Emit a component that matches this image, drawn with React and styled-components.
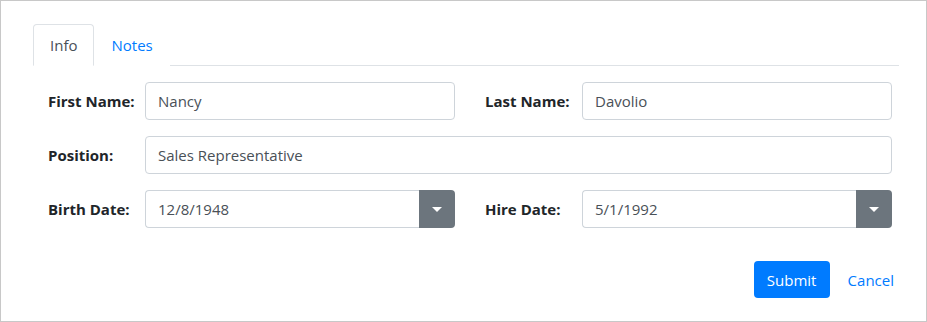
import React from 'react';
import styled, { createGlobalStyle } from 'styled-components';

const GlobalStyle = createGlobalStyle`
  html, body {
    margin: 0;
    padding: 0;
    background: #fff;
  }
  body {
    font-family: "Open Sans", "Noto Sans", Arial, sans-serif;
    font-size: 15px;
    color: #212529;
  }
`;

const Frame = styled.div`
  box-sizing: border-box;
  width: 927px;
  height: 322px;
  border: 1px solid #c8c8c8;
  padding: 23px 27px 0 32px;
`;

const TabBar = styled.div`
  display: flex;
  border-bottom: 1px solid #dee2e6;
  height: 41px;
`;

const Tab = styled.div`
  box-sizing: border-box;
  height: 42px;
  padding: 0 16px;
  display: flex;
  align-items: center;
  border: 1px solid ${p => (p.active ? '#dee2e6' : 'transparent')};
  border-bottom-color: ${p => (p.active ? '#fff' : 'transparent')};
  border-radius: 4px 4px 0 0;
  background: #fff;
  color: ${p => (p.active ? '#495057' : '#007bff')};
  cursor: pointer;
`;

const Form = styled.div`
  padding: 16px 7px 0 15px;
  display: flex;
  flex-direction: column;
  gap: 16px;
`;

const Row = styled.div`
  display: flex;
  align-items: center;
  gap: ${p => (p.gap || 0)}px;
`;

const Field = styled.div`
  display: flex;
  align-items: center;
  flex: ${p => (p.wide ? 1 : '0 0 407px')};
`;

const Label = styled.label`
  flex: 0 0 97px;
  font-weight: 700;
  color: #212529;
`;

const Input = styled.div`
  box-sizing: border-box;
  flex: 1;
  height: 38px;
  border: 1px solid #ced4da;
  border-radius: 4px;
  padding: 0 12px;
  display: flex;
  align-items: center;
  color: #495057;
  overflow: hidden;
`;

const PickerWrap = styled.div`
  flex: 1;
  display: flex;
  height: 38px;
`;

const PickerInput = styled(Input)`
  border-right: none;
  border-radius: 4px 0 0 4px;
`;

const PickerButton = styled.div`
  flex: 0 0 36px;
  background: #6c757d;
  border-radius: 0 4px 4px 0;
  display: flex;
  align-items: center;
  justify-content: center;
`;

const Actions = styled.div`
  display: flex;
  justify-content: flex-end;
  align-items: center;
  margin-top: 33px;
  padding-right: 5px;
  gap: 18px;
`;

const SubmitButton = styled.button`
  box-sizing: border-box;
  height: 37px;
  width: 76px;
  font-family: inherit;
  font-size: inherit;
  background: #007bff;
  color: #fff;
  border: none;
  border-radius: 4px;
  padding: 0;
`;

const CancelLink = styled.a`
  color: #007bff;
  text-decoration: none;
`;

const Caret = () => (
  <svg width="10" height="5" viewBox="0 0 10 5">
    <path d="M0 0 L10 0 L5 5 Z" fill="#fff" />
  </svg>
);

function DatePicker({ value }) {
  return (
    <PickerWrap>
      <PickerInput>{value}</PickerInput>
      <PickerButton>
        <Caret />
      </PickerButton>
    </PickerWrap>
  );
}

export default function App() {
  return (
    <>
      <GlobalStyle />
      <Frame>
        <TabBar>
          <Tab active>Info</Tab>
          <Tab>Notes</Tab>
        </TabBar>
        <Form>
          <Row gap={30}>
            <Field>
              <Label>First Name:</Label>
              <Input>Nancy</Input>
            </Field>
            <Field>
              <Label>Last Name:</Label>
              <Input>Davolio</Input>
            </Field>
          </Row>
          <Row>
            <Field wide>
              <Label>Position:</Label>
              <Input>Sales Representative</Input>
            </Field>
          </Row>
          <Row gap={30}>
            <Field>
              <Label>Birth Date:</Label>
              <DatePicker value="12/8/1948" />
            </Field>
            <Field>
              <Label>Hire Date:</Label>
              <DatePicker value="5/1/1992" />
            </Field>
          </Row>
        </Form>
        <Actions>
          <SubmitButton>Submit</SubmitButton>
          <CancelLink href="#">Cancel</CancelLink>
        </Actions>
      </Frame>
    </>
  );
}
